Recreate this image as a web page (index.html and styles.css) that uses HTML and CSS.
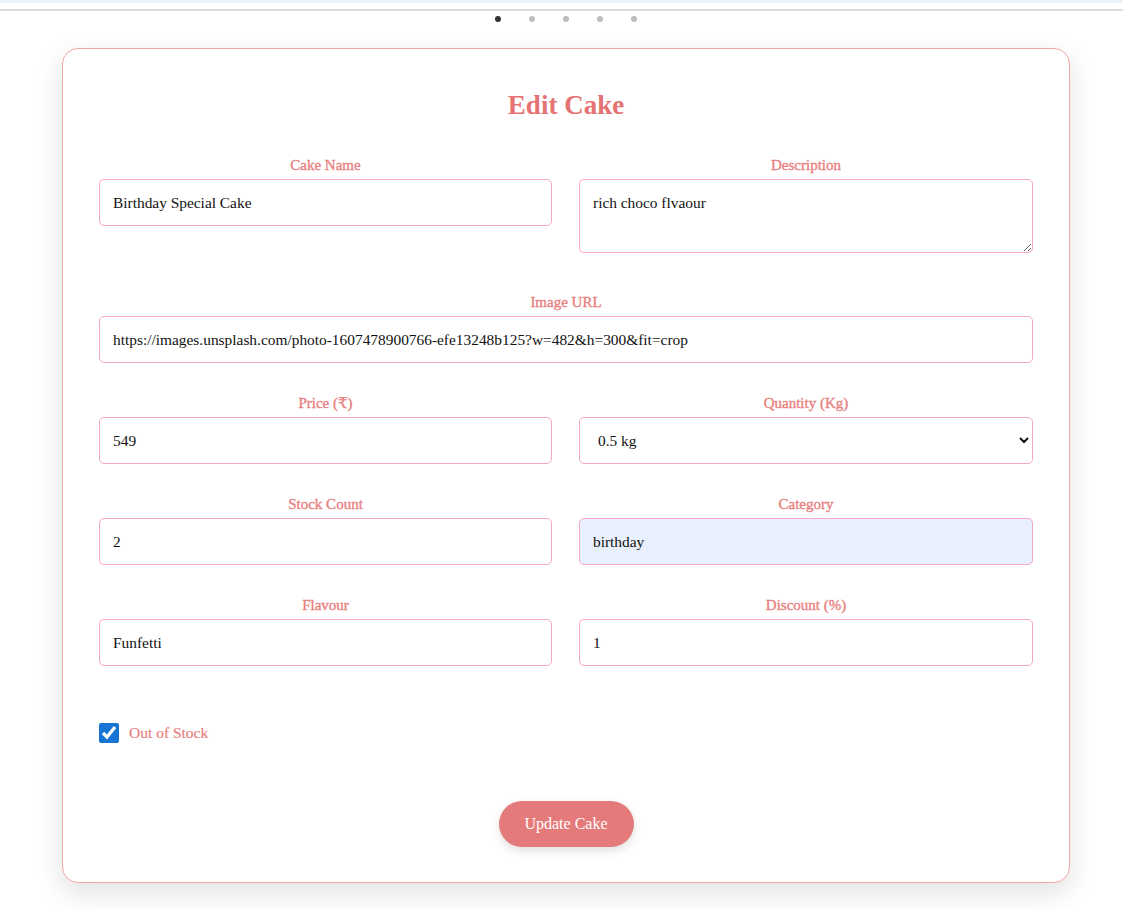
FILE: index.html
```html
<!DOCTYPE html>
<html lang="en">
<head>
<meta charset="utf-8">
<title>Edit Cake</title>
<link rel="stylesheet" href="styles.css">
</head>
<body>
  <div class="top-strip"></div>
  <div class="top-line"></div>
  <div class="dots">
    <span class="dot active"></span>
    <span class="dot"></span>
    <span class="dot"></span>
    <span class="dot"></span>
    <span class="dot"></span>
  </div>
  <div class="page">
    <form class="card">
      <h2 class="title">Edit Cake</h2>
      <div class="grid">
        <div class="group">
          <label class="label">Cake Name</label>
          <input class="field" type="text" value="Birthday Special Cake">
        </div>
        <div class="group group-desc">
          <label class="label">Description</label>
          <textarea class="field area">rich choco flvaour</textarea>
        </div>
        <div class="group full">
          <label class="label">Image URL</label>
          <input class="field" type="text" value="https://images.unsplash.com/photo-1607478900766-efe13248b125?w=482&amp;h=300&amp;fit=crop">
        </div>
        <div class="group">
          <label class="label">Price (₹)</label>
          <input class="field" type="text" value="549">
        </div>
        <div class="group">
          <label class="label">Quantity (Kg)</label>
          <select class="field select">
            <option>0.5 kg</option>
            <option>1 kg</option>
            <option>2 kg</option>
          </select>
        </div>
        <div class="group">
          <label class="label">Stock Count</label>
          <input class="field" type="text" value="2">
        </div>
        <div class="group">
          <label class="label">Category</label>
          <input class="field autofill" type="text" value="birthday">
        </div>
        <div class="group">
          <label class="label">Flavour</label>
          <input class="field" type="text" value="Funfetti">
        </div>
        <div class="group">
          <label class="label">Discount (%)</label>
          <input class="field" type="text" value="1">
        </div>
      </div>
      <label class="check">
        <input type="checkbox" class="checkbox" checked>
        <span>Out of Stock</span>
      </label>
      <div class="actions">
        <button type="button" class="btn">Update Cake</button>
      </div>
    </form>
  </div>
</body>
</html>
```
FILE: styles.css
```css
* { box-sizing: border-box; }
html, body { margin: 0; padding: 0; background: #fff; }
body {
  font-family: "Liberation Serif", "DejaVu Serif", serif;
  color: #111;
}
.top-strip { height: 3px; background: #edf1f9; }
.top-line { height: 2px; margin-top: 6px; background: #dddddd; }
.dots {
  display: flex;
  justify-content: center;
  gap: 28px;
  margin-top: 5px;
  padding-left: 9px;
  height: 6px;
}
.dot { width: 6px; height: 6px; border-radius: 50%; background: #bdbdbd; }
.dot.active { background: #333; }
.page {
  padding: 26px 53px 27px 62px;
}
.card {
  display: block;
  border: 1px solid #f2a8a8;
  border-radius: 16px;
  padding: 40px 36px 35px 36px;
  background: #fff;
  box-shadow: 0 10px 28px rgba(0,0,0,0.12);
}
.title {
  margin: 0 0 34px;
  text-align: center;
  font-size: 27px;
  line-height: 32px;
  font-weight: 700;
  color: #e57373;
}
.grid {
  display: grid;
  grid-template-columns: 453px 454px;
  column-gap: 27px;
  row-gap: 30px;
}
.full { grid-column: 1 / -1; }
.group { display: flex; flex-direction: column; }
.group-desc { padding-bottom: 9px; }
.label {
  display: block;
  text-align: center;
  font-size: 15px;
  line-height: 20px;
  font-weight: 400;
  -webkit-text-stroke: 0.35px #e88080;
  color: #e88080;
  margin-bottom: 4px;
}
.field {
  display: block;
  width: 100%;
  height: 47px;
  border: 1px solid #f5a7c9;
  border-radius: 5px;
  padding: 0 13px;
  font-family: inherit;
  font-size: 15.4px;
  color: #111;
  background: #fff;
  outline: none;
}
.area {
  height: 74px;
  padding: 13px 13px;
  line-height: 20px;
  resize: vertical;
}
.select { padding: 0 10px 0 14px; }
.autofill { background: #e8f0fe; }
.check {
  display: flex;
  align-items: center;
  gap: 10px;
  margin-top: 57px;
  font-size: 15.5px;
  color: #e88080;
  -webkit-text-stroke: 0.2px #e88080;
}
.checkbox { width: 20px; height: 20px; margin: 0; accent-color: #1574d4; }
.actions {
  display: flex;
  justify-content: center;
  margin-top: 58px;
}
.btn {
  width: 135px;
  height: 46px;
  border: none;
  border-radius: 23px;
  background: #e57a7a;
  color: #fff;
  font-family: inherit;
  font-size: 16px;
  box-shadow: 0 4px 10px rgba(0,0,0,0.12);
}
```
